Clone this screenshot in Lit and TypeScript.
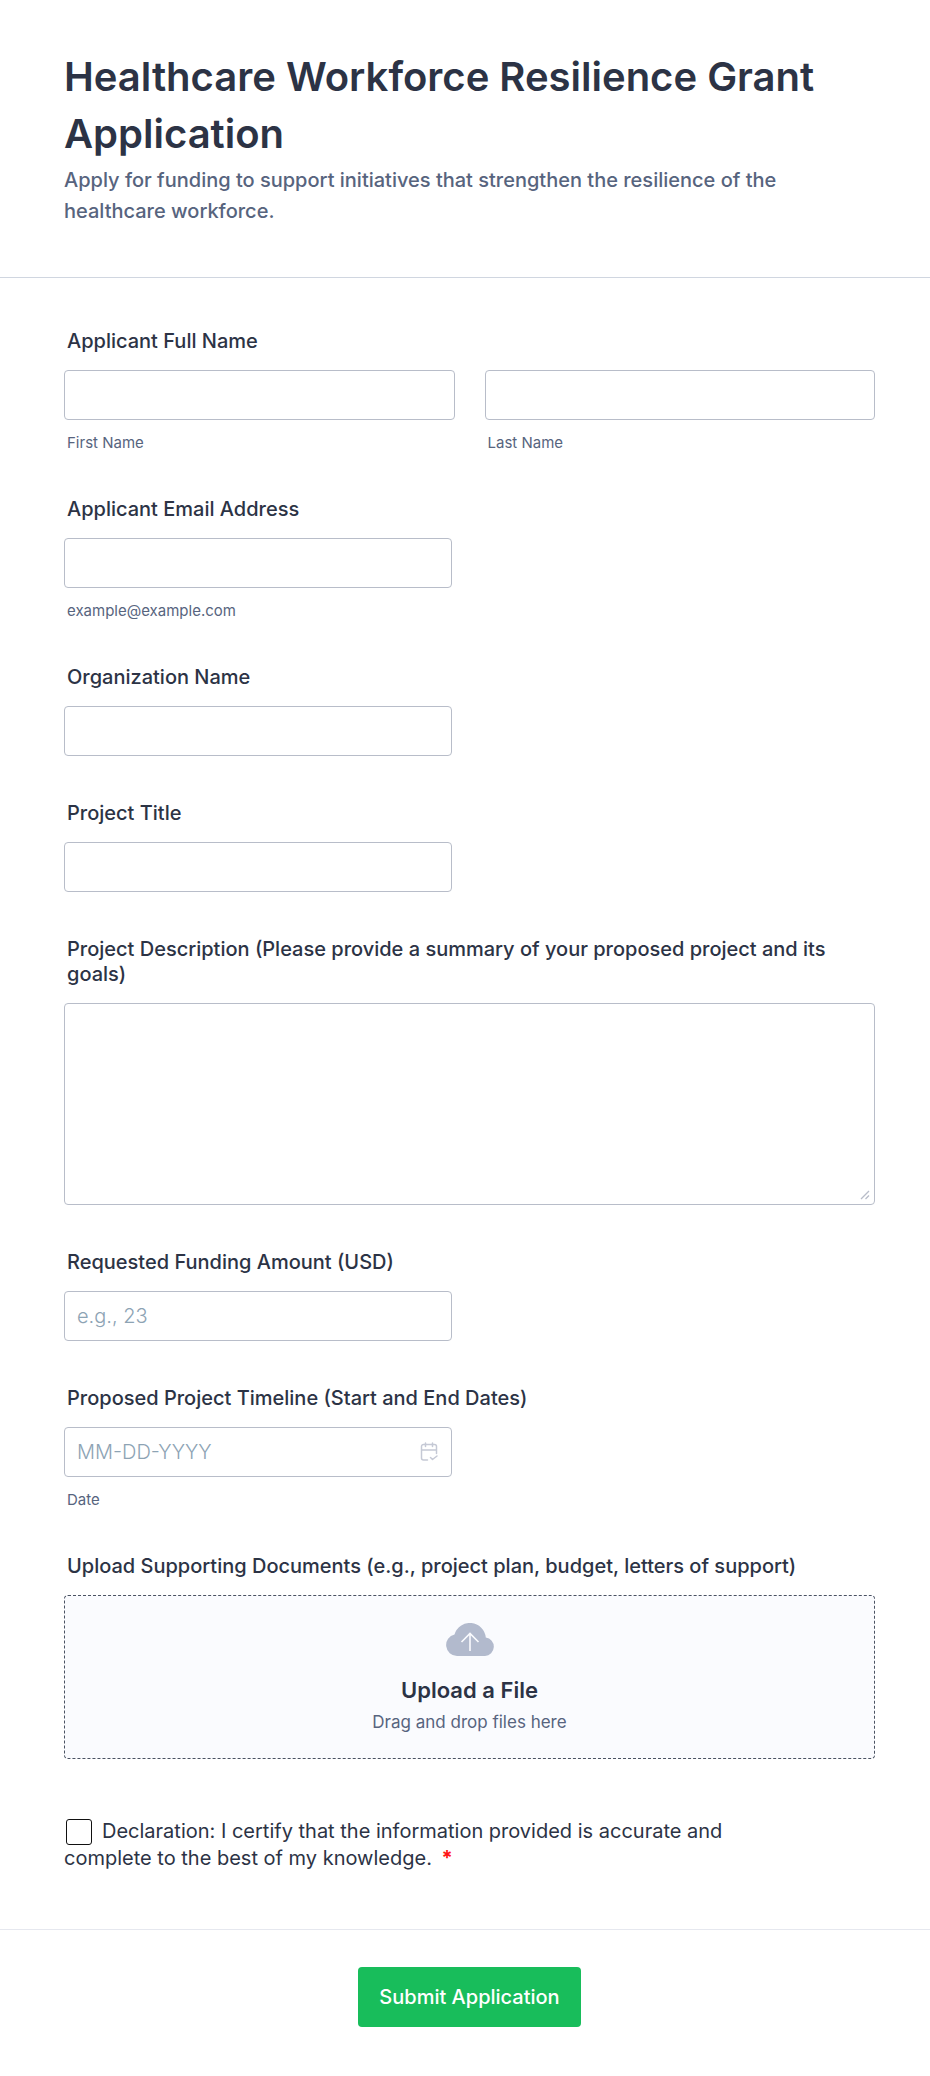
import { LitElement, html, css } from "lit";
import { customElement } from "lit/decorators.js";

@customElement("app-root")
export class AppRoot extends LitElement {
  static styles = css`
    :host {
      display: block;
      font-family: Inter, sans-serif;
      color: #2c3345;
      background: #fff;
    }
    * { box-sizing: border-box; }
    .header {
      padding: 48px 64px 50px;
      border-bottom: 1px solid #d0d6e0;
    }
    h1 {
      margin: 0 0 3px;
      font-size: 40px;
      line-height: 57px;
      font-weight: 600;
    }
    .intro {
      margin: 0;
      max-width: 760px;
      font-size: 20px;
      line-height: 31px;
      font-weight: 500;
      color: #57647e;
    }
    .fields {
      display: flex;
      flex-direction: column;
      gap: 45px;
      padding: 51px 55px 0 64px;
    }
    .field { display: flex; flex-direction: column; }
    .label {
      padding: 0 3px;
      margin-bottom: 16px;
      font-size: 20px;
      line-height: 25px;
      font-weight: 500;
    }
    .pair { display: grid; grid-template-columns: 1fr 1fr; gap: 30px; }
    .part { display: flex; flex-direction: column; }
    .half { position: relative; width: 388px; max-width: 100%; }
    .whole { position: relative; }
    .sub {
      padding-left: 3px;
      margin-top: 14px;
      font-size: 15px;
      line-height: 18px;
      color: #57647e;
    }
    .box {
      display: block;
      width: 100%;
      height: 50px;
      padding: 0 12px;
      border: 1px solid #b8bdc9;
      border-radius: 4px;
      font: 20px Inter, sans-serif;
      color: inherit;
      background: #fff;
    }
    textarea.box { height: 202px; padding: 12px; resize: vertical; }
    textarea.box::-webkit-resizer { background: transparent; }
    .grip { position: absolute; right: 5px; bottom: 5px; pointer-events: none; }
    .box::placeholder { color: #8da3b4; opacity: 1; font-weight: 300; }
    .calendar { position: absolute; right: 13px; top: 15px; }
    .drop {
      display: flex;
      flex-direction: column;
      align-items: center;
      padding: 27px 12px 25px;
      border: 1px dashed #4a5262;
      border-radius: 4px;
      background: #fafbfe;
    }
    .file { position: absolute; opacity: 0; width: 1px; height: 1px; }
    .up { margin-top: 19px; font-size: 22px; line-height: 30px; font-weight: 600; }
    .hint { margin-top: 6px; font-size: 17px; line-height: 22px; color: #57647e; }
    .agree {
      max-width: 670px;
      margin-top: 14px;
      font-size: 20px;
      line-height: 27px;
    }
    .tick {
      appearance: none;
      width: 26px;
      height: 26px;
      margin: 0 10px 0 2px;
      border: 1px solid #111;
      border-radius: 3px;
      vertical-align: -7px;
    }
    .star { color: #ff1414; font-weight: 700; margin-left: 4px; }
    .footer {
      display: flex;
      justify-content: center;
      margin-top: 57px;
      padding: 37px 55px 49px 64px;
      border-top: 1px solid #e6e8ef;
    }
    .submit {
      height: 60px;
      padding: 0 21px;
      border: 0;
      border-radius: 4px;
      background: #18bd5b;
      color: #fff;
      font: 500 20px Inter, sans-serif;
    }
  `;

  private text(id: string, label: string, sub = "", type = "text", placeholder = "") {
    return html`<div class="field">
      <label class="label" for=${id}>${label}</label>
      <div class="half"><input class="box" id=${id} type=${type} placeholder=${placeholder} /></div>
      ${sub ? html`<span class="sub">${sub}</span>` : ""}
    </div>`;
  }

  render() {
    return html`<form>
      <header class="header">
        <h1>Healthcare Workforce Resilience Grant Application</h1>
        <p class="intro">Apply for funding to support initiatives that strengthen the resilience of the healthcare workforce.</p>
      </header>
      <div class="fields">
        <div class="field" role="group" aria-labelledby="name">
          <span class="label" id="name">Applicant Full Name</span>
          <div class="pair">
            <div class="part"><input class="box" id="first" type="text" /><label class="sub" for="first">First Name</label></div>
            <div class="part"><input class="box" id="last" type="text" /><label class="sub" for="last">Last Name</label></div>
          </div>
        </div>
        ${this.text("email", "Applicant Email Address", "example@example.com", "email")}
        ${this.text("org", "Organization Name")}
        ${this.text("title", "Project Title")}
        <div class="field">
          <label class="label" for="description">Project Description (Please provide a summary of your proposed project and its goals)</label>
          <div class="whole">
            <textarea class="box" id="description"></textarea>
            <svg class="grip" width="10" height="10" viewBox="0 0 10 10" fill="none" stroke="#b8bdc9" stroke-width="1.3"><path d="M1 9 9 1M5.500 9 9 5.500" /></svg>
          </div>
        </div>
        ${this.text("amount", "Requested Funding Amount (USD)", "", "text", "e.g., 23")}
        <div class="field">
          <label class="label" for="date">Proposed Project Timeline (Start and End Dates)</label>
          <div class="half">
            <input class="box" id="date" type="text" placeholder="MM-DD-YYYY" />
            <svg class="calendar" width="20" height="20" viewBox="0 0 20 20" fill="none" stroke="#c5c9d5" stroke-width="1.5" stroke-linecap="round" stroke-linejoin="round"><path d="M17.500 11.500V4.500a2 2 0 0 0-2-2h-11a2 2 0 0 0-2 2v11.500a2 2 0 0 0 2 2H8.500M2.500 8h15M6.500 1v3.500M13.500 1v3.500M11.500 15.500l2 2L18 14" /></svg>
          </div>
          <span class="sub">Date</span>
        </div>
        <div class="field">
          <label class="label" for="files">Upload Supporting Documents (e.g., project plan, budget, letters of support)</label>
          <label class="drop">
            <input class="file" id="files" type="file" multiple />
            <svg width="48" height="33" viewBox="0 0 48 33"><path d="M11 33A10.900 10.900 0 0 1 8.500 11.500 16 16 0 0 1 39.800 14.500 9.300 9.300 0 0 1 39 33Z" fill="#b2bacd" /><path d="M24 28V10.500M15.500 19 24 10.500l8.500 8.500" fill="none" stroke="#fafbfe" stroke-width="1.600" /></svg>
            <span class="up">Upload a File</span>
            <span class="hint">Drag and drop files here</span>
          </label>
        </div>
        <div class="agree">
          <input class="tick" id="agree" type="checkbox" required /><label for="agree">Declaration: I certify that the information provided is accurate and complete to the best of my knowledge.</label>
          <span class="star">*</span>
        </div>
      </div>
      <footer class="footer"><button class="submit" type="submit">Submit Application</button></footer>
    </form>`;
  }
}
